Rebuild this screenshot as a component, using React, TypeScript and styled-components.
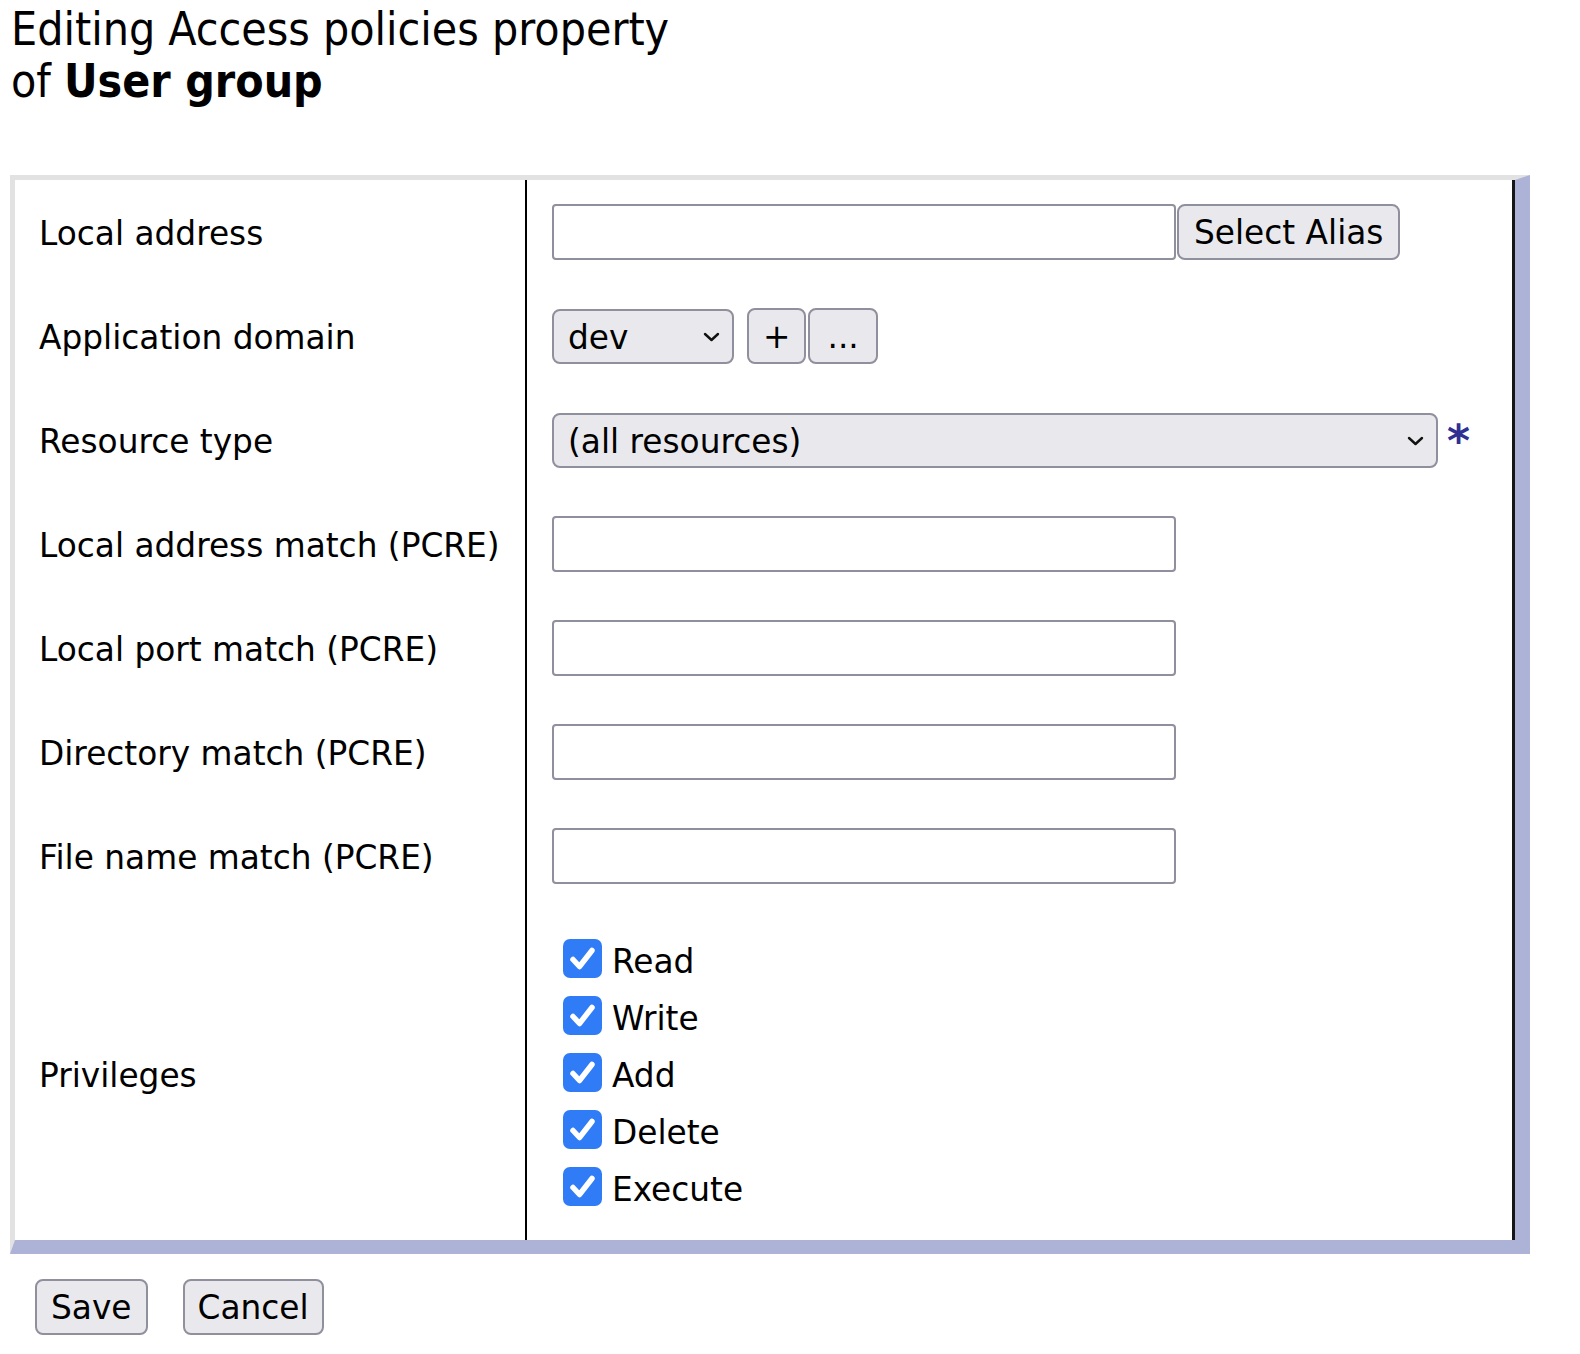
import React from "react";
import styled, { createGlobalStyle } from "styled-components";

const GlobalStyle = createGlobalStyle`
  html, body { margin: 0; padding: 0; background: #fff; }
  body { font-family: "DejaVu Sans", Verdana, sans-serif; color: #000; }
  * { box-sizing: border-box; }
`;

const Page = styled.div`
  padding: 4px 0 20px 10px;
  width: 1560px;
`;

const Title = styled.h1`
  margin: 0 0 68px 1px;
  font-family: "DejaVu Sans Condensed", "DejaVu Sans", sans-serif;
  font-stretch: condensed;
  font-weight: normal;
  font-size: 46px;
  line-height: 51.5px;
  strong { font-weight: bold; }
`;

const Panel = styled.div`
  display: grid;
  grid-template-columns: 510px 990px;
  grid-template-rows: repeat(7, 104px) 332px;
  width: 1520px;
  border-style: solid;
  border-width: 5px 15px 14px 5px;
  border-color: #e2e2e2 #acb3d6 #acb3d6 #e2e2e2;
`;

const LabelCell = styled.div`
  display: flex;
  align-items: center;
  padding: 3px 0 0 24px;
  font-size: 32.8px;
  white-space: nowrap;
`;

const FieldCell = styled.div<{ $top?: boolean }>`
  display: flex;
  flex-direction: ${(p) => (p.$top ? "column" : "row")};
  align-items: ${(p) => (p.$top ? "flex-start" : "center")};
  padding-left: 25px;
  padding-top: ${(p) => (p.$top ? "22px" : "0")};
  border-left: 2px solid #000;
  border-right: 3px solid #151515;
`;

const Group = styled.div<{ $gap: number; $align?: string }>`
  display: flex;
  align-items: ${(p) => p.$align || "center"};
  gap: ${(p) => p.$gap}px;
`;

const TextInput = styled.input`
  width: 624px;
  height: 56px;
  border: 2px solid #8f8f9d;
  border-radius: 4px;
  background: #fff;
  font-family: "DejaVu Sans", sans-serif;
  font-size: 32px;
  padding: 0 12px;
  margin: 0;
  outline: none;
`;

const Button = styled.button<{ $pad?: number }>`
  height: 56px;
  padding: 3px ${(p) => p.$pad ?? 14}px 0;
  margin: 0;
  border: 2px solid #8f8f9d;
  border-radius: 8px;
  background: #e9e9ed;
  color: #000;
  font-family: "DejaVu Sans", sans-serif;
  font-size: 32.8px;
  line-height: 1;
  cursor: pointer;
`;

const SelectWrap = styled.div<{ $w: number }>`
  position: relative;
  width: ${(p) => p.$w}px;
  height: 55px;
`;

const NativeSelect = styled.select`
  appearance: none;
  -webkit-appearance: none;
  width: 100%;
  height: 100%;
  margin: 0;
  border: 2px solid #8f8f9d;
  border-radius: 8px;
  background: #e9e9ed;
  color: #000;
  font-family: "DejaVu Sans", sans-serif;
  font-size: 32.8px;
  padding: 4px 40px 0 14px;
  outline: none;
`;

const Chevron = styled.svg`
  position: absolute;
  right: 14px;
  top: 50%;
  width: 17px;
  height: 10px;
  margin-top: -4px;
  pointer-events: none;
`;

const Asterisk = styled.span`
  color: #2e3192;
  font-weight: bold;
  font-size: 44px;
  line-height: 1;
  margin: 6px 0 0 9px;
`;

const CheckRow = styled.label`
  display: flex;
  align-items: center;
  gap: 10px;
  height: 57px;
  padding-left: 11px;
  font-size: 32.8px;
`;

const CheckBox = styled.span`
  display: flex;
  align-items: center;
  justify-content: center;
  width: 39px;
  height: 39px;
  border-radius: 7px;
  background: #2f7cf6;
  flex: none;
`;

const CheckText = styled.span`
  padding-top: 6px;
`;

const Footer = styled.div`
  display: flex;
  gap: 35px;
  padding: 25px 0 0 25px;
`;

const Select = ({ w, value }: { w: number; value: string }) => (
  <SelectWrap $w={w}>
    <NativeSelect defaultValue={value}>
      <option>{value}</option>
    </NativeSelect>
    <Chevron viewBox="0 0 17 10">
      <path d="M2 2 L8.5 8 L15 2" fill="none" stroke="#111" strokeWidth="2.4" strokeLinecap="round" strokeLinejoin="round" />
    </Chevron>
  </SelectWrap>
);

const Check = ({ label }: { label: string }) => (
  <CheckRow>
    <CheckBox>
      <svg width="39" height="39" viewBox="0 0 39 39">
        <path d="M10 20.5 L16.5 27.5 L29 11.5" fill="none" stroke="#fff" strokeWidth="5.5" strokeLinecap="round" strokeLinejoin="round" />
      </svg>
    </CheckBox>
    <CheckText>{label}</CheckText>
  </CheckRow>
);

const textRows = [
  "Local address match (PCRE)",
  "Local port match (PCRE)",
  "Directory match (PCRE)",
  "File name match (PCRE)",
];

export default function App() {
  return (
    <>
      <GlobalStyle />
      <Page>
        <Title>
          Editing Access policies property
          <br />
          of <strong>User group</strong>
        </Title>
        <Panel>
          <LabelCell>Local address</LabelCell>
          <FieldCell>
            <Group $gap={1}>
              <TextInput type="text" />
              <Button $pad={15}>Select Alias</Button>
            </Group>
          </FieldCell>

          <LabelCell>Application domain</LabelCell>
          <FieldCell>
            <Group $gap={13}>
              <Select w={182} value="dev" />
              <Group $gap={2}>
                <Button>+</Button>
                <Button $pad={17}>...</Button>
              </Group>
            </Group>
          </FieldCell>

          <LabelCell>Resource type</LabelCell>
          <FieldCell>
            <Group $gap={0} $align="flex-start">
              <Select w={886} value="(all resources)" />
              <Asterisk>*</Asterisk>
            </Group>
          </FieldCell>

          {textRows.map((r) => (
            <React.Fragment key={r}>
              <LabelCell>{r}</LabelCell>
              <FieldCell>
                <TextInput type="text" />
              </FieldCell>
            </React.Fragment>
          ))}

          <LabelCell>Privileges</LabelCell>
          <FieldCell $top>
            {["Read", "Write", "Add", "Delete", "Execute"].map((c) => (
              <Check key={c} label={c} />
            ))}
          </FieldCell>
        </Panel>
        <Footer>
          <Button>Save</Button>
          <Button $pad={13}>Cancel</Button>
        </Footer>
      </Page>
    </>
  );
}
